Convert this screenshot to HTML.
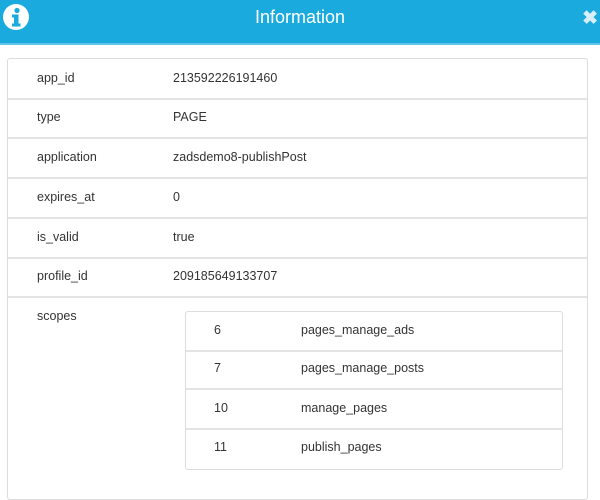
<!DOCTYPE html><html><head><style>
body{margin:0;width:600px;height:479px;overflow:hidden;background:#fff;font-family:"Liberation Sans",sans-serif;font-size:12.5px;color:#333}
.hd{position:absolute;left:0;top:0;width:600px;height:43px;background:#1aaadd;border-bottom:2px solid #5fc6ea}
.hd .t{position:absolute;left:0;width:600px;text-align:center;top:7px;color:#fff;font-size:18px}
.box{position:absolute;left:7px;top:58px;width:579px;height:440px;border:1px solid #ddd;border-radius:3px}
.r{position:absolute;left:0;width:579px;height:39px;border-bottom:2px solid #e4e4e4}
.r span{position:absolute;top:12px}
.in{position:absolute;left:177px;top:252px;width:376px;height:157px;border:1px solid #ddd;border-radius:3px}
.ir{position:absolute;left:0;width:376px;height:38px;border-bottom:2px solid #e4e4e4}
.ir span{position:absolute;top:11px}
</style></head><body>
<div class="hd"><svg style="position:absolute;left:2px;top:3px" width="28" height="28" viewBox="0 0 28 28"><circle cx="14" cy="14" r="13" fill="#fff"/><circle cx="15" cy="7.5" r="2.6" fill="#1aaadd"/><path d="M10 11.5h6.5v9h2v3h-8.5v-3h2v-6h-2z" fill="#1aaadd"/></svg><div class="t">Information</div><div style="position:absolute;right:2px;top:7px;color:#d8eef8;font-size:19px;font-weight:bold">✖</div></div>
<div class="box">
<div class="r" style="top:0"><span style="left:29px">app_id</span><span style="left:165px">213592226191460</span></div>
<div class="r" style="top:39px"><span style="left:29px">type</span><span style="left:165px">PAGE</span></div>
<div class="r" style="top:79px"><span style="left:29px">application</span><span style="left:165px">zadsdemo8-publishPost</span></div>
<div class="r" style="top:119px"><span style="left:29px">expires_at</span><span style="left:165px">0</span></div>
<div class="r" style="top:159px"><span style="left:29px">is_valid</span><span style="left:165px">true</span></div>
<div class="r" style="top:198px"><span style="left:29px">profile_id</span><span style="left:165px">209185649133707</span></div>
<span style="position:absolute;left:29px;top:250px">scopes</span>
<div class="in">
<div class="ir" style="top:0"><span style="left:28px">6</span><span style="left:115px">pages_manage_ads</span></div>
<div class="ir" style="top:38px"><span style="left:28px">7</span><span style="left:115px">pages_manage_posts</span></div>
<div class="ir" style="top:78px"><span style="left:28px">10</span><span style="left:115px">manage_pages</span></div>
<div style="position:absolute;top:128px;left:28px">11</div><div style="position:absolute;top:128px;left:115px">publish_pages</div>
</div></div>
</body></html>
